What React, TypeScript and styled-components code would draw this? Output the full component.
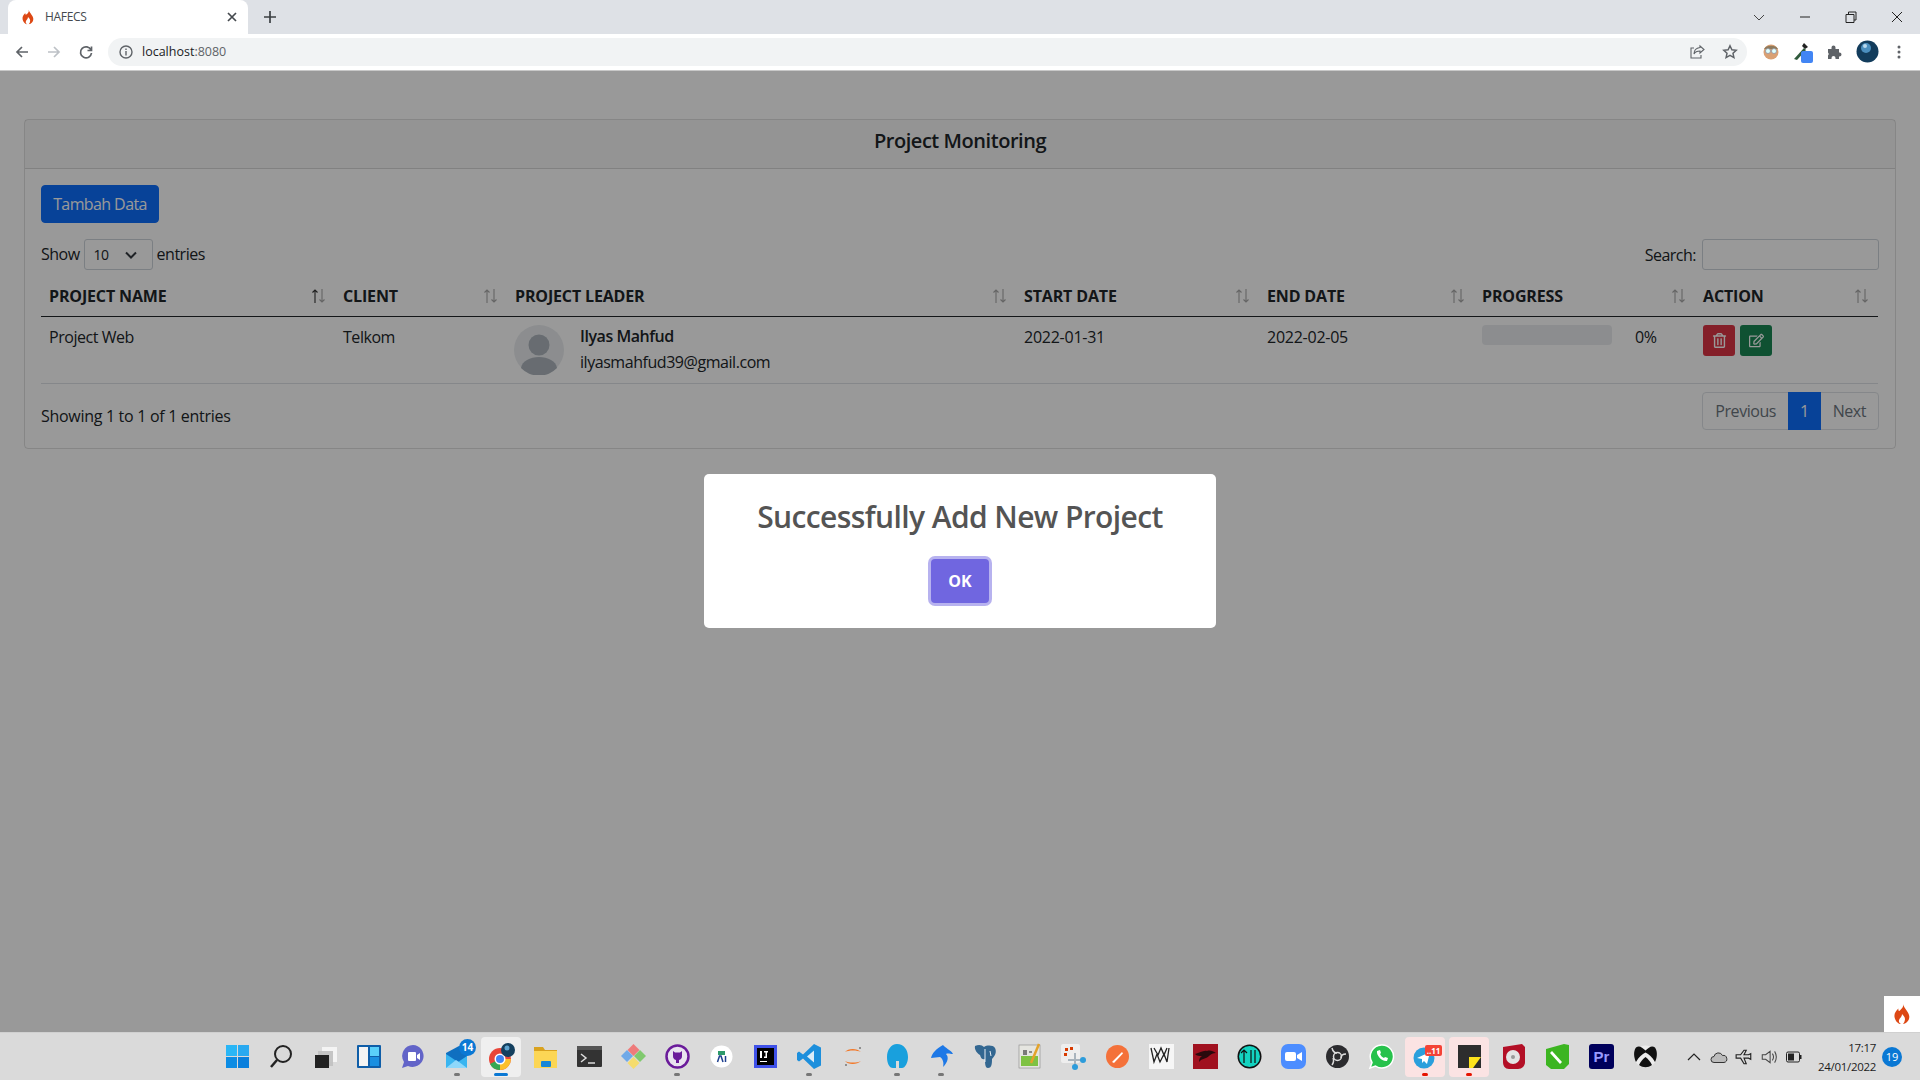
import { ReactNode } from 'react';
import styled, { createGlobalStyle } from 'styled-components';
import { FaRegTrashAlt, FaRegEdit } from 'react-icons/fa';

const GlobalStyle = createGlobalStyle`
  html, body {
    margin: 0;
    padding: 0;
    overflow: hidden;
  }
  * {
    box-sizing: border-box;
  }
  body {
    font-family: "Open Sans", "Noto Sans", sans-serif;
    color: #212529;
  }
`;

const Screen = styled.div`
  display: flex;
  flex-direction: column;
  width: 1920px;
  height: 1080px;
  overflow: hidden;
`;

const TabStrip = styled.div`
  display: flex;
  align-items: flex-end;
  height: 34px;
  padding-left: 8px;
  background: #dee1e6;
`;

const Tab = styled.div`
  display: flex;
  align-items: center;
  width: 240px;
  height: 34px;
  padding: 0 8px 1px 12px;
  gap: 9px;
  background: #fff;
  border-radius: 8px 8px 0 0;
  font: 12px "Open Sans", sans-serif;
  letter-spacing: -0.3px;
  color: #45494e;
`;

const TabTitle = styled.span`
  flex: 1;
`;

const NewTab = styled.div`
  display: flex;
  align-items: center;
  justify-content: center;
  width: 28px;
  height: 34px;
  margin-left: 8px;
  color: #3c4043;
`;

const WindowButtons = styled.div`
  display: flex;
  align-items: center;
  height: 34px;
  margin-left: auto;
`;

const WindowButton = styled.div`
  display: flex;
  align-items: center;
  justify-content: center;
  width: 46px;
  height: 28px;
`;

const Toolbar = styled.div`
  display: flex;
  align-items: center;
  height: 37px;
  padding: 0 5px 1px 6px;
  background: #fff;
  border-bottom: 1px solid #c8c8c8;
`;

const NavButton = styled.div`
  display: flex;
  align-items: center;
  justify-content: center;
  width: 32px;
  height: 28px;
`;

const Omnibox = styled.div`
  display: flex;
  align-items: center;
  flex: 1;
  height: 28px;
  margin: 0 8px 0 6px;
  padding: 0 9px 0 10px;
  gap: 8px;
  background: #f1f3f4;
  border-radius: 14px;
  font: 12.5px "Open Sans", sans-serif;
  color: #202124;
`;

const Port = styled.span`
  margin-left: -8px;
  color: #5f6368;
`;

const OmniboxEnd = styled.div`
  display: flex;
  align-items: center;
  margin-left: auto;
  gap: 17px;
`;

const ExtensionButton = styled.div`
  display: flex;
  align-items: center;
  justify-content: center;
  width: 32px;
  height: 28px;
`;

const Viewport = styled.div`
  position: relative;
  flex: 1;
  padding: 48px 24px 0 24px;
  background: #fff;
  overflow: hidden;
`;

const Card = styled.section`
  border: 1px solid rgba(0, 0, 0, 0.125);
  border-radius: 4px;
  font-size: 16px;
`;

const CardHeader = styled.header`
  height: 49px;
  line-height: 42px;
  text-align: center;
  background: rgba(0, 0, 0, 0.03);
  border-bottom: 1px solid rgba(0, 0, 0, 0.125);
  font-size: 20px;
  font-weight: 600;
  letter-spacing: -0.45px;
`;

const CardBody = styled.div`
  padding: 16px 16px 18px;
`;

const PrimaryButton = styled.button`
  display: block;
  width: 118px;
  height: 38px;
  padding: 0;
  background: #0d6efd;
  border: 1px solid #0d6efd;
  border-radius: 4px;
  color: #fff;
  font: inherit;
  letter-spacing: -0.6px;
`;

const TableControls = styled.div`
  display: flex;
  align-items: center;
  justify-content: space-between;
  margin-top: 16px;
  height: 31px;
  letter-spacing: -0.5px;
`;

const LengthLabel = styled.label`
  display: flex;
  align-items: center;
  gap: 4px;
  margin-top: -1px;
`;

const LengthSelect = styled.div`
  display: flex;
  align-items: center;
  justify-content: space-between;
  width: 69px;
  height: 31px;
  margin-top: 1px;
  padding: 0 13px 0 9px;
  background: #fff;
  border: 1px solid #ced4da;
  border-radius: 3px;
  font-size: 14px;
`;

const SearchLabel = styled.label`
  display: flex;
  align-items: center;
  gap: 6px;
`;

const SearchInput = styled.input`
  width: 177px;
  height: 31px;
  background: #fff;
  border: 1px solid #ced4da;
  border-radius: 3px;
`;

const Table = styled.table`
  width: 1837px;
  margin-top: 6px;
  border-collapse: collapse;
  table-layout: fixed;
  letter-spacing: -0.45px;
`;

const HeadCell = styled.th`
  height: 40px;
  padding: 1px 8px 0;
  border-bottom: 1px solid #212529;
  font-weight: 700;
  text-align: left;
  text-transform: uppercase;
  letter-spacing: -0.15px;
`;

const HeadInner = styled.div`
  display: flex;
  align-items: center;
  justify-content: space-between;
`;

const BodyCell = styled.td`
  height: 67px;
  padding: 8px;
  vertical-align: top;
  border-bottom: 1px solid #dee2e6;
`;

const CellText = styled.div<{ $numeric?: boolean }>`
  line-height: 24px;
  letter-spacing: ${({ $numeric }) => ($numeric ? '-0.25px' : 'inherit')};
`;

const Leader = styled.div`
  display: flex;
  align-items: flex-start;
  gap: 16px;
  margin-left: -1px;
`;

const Avatar = styled.svg`
  display: block;
  width: 50px;
  height: 50px;
  flex: none;
`;

const LeaderName = styled.div`
  font-weight: 600;
  line-height: 26px;
  margin-top: -2px;
`;

const LeaderMail = styled.div`
  line-height: 26px;
`;

const ProgressCell = styled.div`
  display: flex;
  align-items: flex-start;
  gap: 23px;
`;

const ProgressTrack = styled.div`
  width: 130px;
  height: 20px;
  background: #e9ecef;
  border-radius: 4px;
`;

const ActionRow = styled.div`
  display: flex;
  gap: 5px;
`;

const ActionButton = styled.button<{ $bg: string }>`
  display: flex;
  align-items: center;
  justify-content: center;
  width: 32px;
  height: 31px;
  padding: 0;
  background: ${({ $bg }) => $bg};
  border: none;
  border-radius: 3px;
  color: #fff;
  font-size: 15px;
`;

const TableFooter = styled.div`
  display: flex;
  align-items: flex-start;
  justify-content: space-between;
  margin-top: 8px;
  letter-spacing: -0.3px;
`;

const EntriesInfo = styled.span`
  padding-top: 13px;
`;

const Pagination = styled.div`
  display: flex;
  height: 38px;
  background: #fff;
  border: 1px solid #dee2e6;
  border-radius: 4px;
  letter-spacing: -0.45px;
`;

const PageLink = styled.div<{ $active?: boolean }>`
  display: flex;
  align-items: center;
  padding: 0 12px;
  margin-top: -1px;
  margin-bottom: -1px;
  background: ${({ $active }) => ($active ? '#0d6efd' : 'transparent')};
  color: ${({ $active }) => ($active ? '#fff' : '#6c757d')};
`;

const Backdrop = styled.div`
  position: absolute;
  inset: 0;
  display: flex;
  justify-content: center;
  align-items: flex-start;
  padding-top: 403px;
  background: rgba(0, 0, 0, 0.4);
`;

const Modal = styled.div`
  display: flex;
  flex-direction: column;
  align-items: center;
  width: 512px;
  height: 154px;
  padding-top: 20px;
  background: #fff;
  border-radius: 5px;
`;

const ModalTitle = styled.h2`
  margin: 0;
  color: #545454;
  font-size: 30px;
  font-weight: 600;
  line-height: 46px;
  letter-spacing: -0.6px;
`;

const ConfirmButton = styled.button`
  width: 58px;
  height: 44px;
  margin-top: 19px;
  padding: 0;
  background: #7066e0;
  border: none;
  border-radius: 4px;
  box-shadow: 0 0 0 3px rgba(112, 102, 224, 0.5);
  color: #fff;
  font: 700 16px "Open Sans", sans-serif;
`;

const DebugToggle = styled.div`
  position: absolute;
  right: 0;
  bottom: 0;
  display: flex;
  align-items: center;
  justify-content: center;
  width: 36px;
  height: 36px;
  background: #fff;
`;

const Taskbar = styled.footer`
  display: flex;
  align-items: center;
  height: 48px;
  padding-left: 217px;
  background: #dadada;
  border-top: 1px solid #d0d0d0;
`;

const TaskIcon = styled.div<{ $state?: 'open' | 'alert' }>`
  position: relative;
  display: flex;
  align-items: center;
  justify-content: center;
  width: 40px;
  height: 40px;
  margin-right: 4px;
  border-radius: 4px;
  background: ${({ $state }) =>
    $state === 'alert' ? '#fbe3e3' : $state === 'open' ? '#efefef' : 'transparent'};
`;

const RunningDot = styled.span<{ $color: string; $wide?: boolean }>`
  position: absolute;
  left: 50%;
  bottom: 1px;
  width: ${({ $wide }) => ($wide ? '14px' : '6px')};
  height: 3px;
  margin-left: ${({ $wide }) => ($wide ? '-7px' : '-3px')};
  border-radius: 2px;
  background: ${({ $color }) => $color};
`;

const CountBadge = styled.span<{ $bg: string; $square?: boolean }>`
  position: absolute;
  top: ${({ $square }) => ($square ? '8px' : '2px')};
  right: ${({ $square }) => ($square ? '3px' : '1px')};
  min-width: 17px;
  height: ${({ $square }) => ($square ? '11px' : '17px')};
  border-radius: ${({ $square }) => ($square ? '2px' : '9px')};
  background: ${({ $bg }) => $bg};
  color: #fff;
  font: 700 ${({ $square }) => ($square ? '8px/11px' : '10px/17px')} "Open Sans", sans-serif;
  text-align: center;
`;

const Tray = styled.div`
  display: flex;
  align-items: center;
  margin-left: auto;
  gap: 7px;
  padding-right: 18px;
`;

const TrayIcon = styled.div`
  display: flex;
  align-items: center;
  justify-content: center;
  width: 18px;
  height: 20px;
`;

const Clock = styled.div`
  margin-left: 8px;
  text-align: right;
  font: 11.5px/19px "Open Sans", sans-serif;
  letter-spacing: -0.3px;
  color: #1c1c1c;
`;

const NotifyBadge = styled.div`
  display: flex;
  align-items: center;
  justify-content: center;
  width: 20px;
  height: 20px;
  margin-left: -1px;
  border-radius: 50%;
  background: #0a78d4;
  color: #fff;
  font: 11px "Open Sans", sans-serif;
`;

const Flame = ({ size }: { size: number }) => (
  <svg width={size} height={size} viewBox="0 0 24 24">
    <path
      fill="#dd4814"
      d="M13 1c1 3-1 5-3 7-2 2-2-1-2-2-3 3-5 6-4 10 1 4 4 7 7 7-2-1-3-3-2-5 1-2 3-3 3-6 2 2 4 4 3 7-.3 2-1.500 3-2 4 4-.5 7-4 7-8 0-5-5-8-7-14z"
    />
  </svg>
);

const Line = ({ d, c = '#5f6368', w = 2, s = 16 }: { d: string; c?: string; w?: number; s?: number }) => (
  <svg width={s} height={s} viewBox="0 0 16 16" fill="none" stroke={c} strokeWidth={w}>
    <path d={d} />
  </svg>
);

const SortArrows = ({ active }: { active?: boolean }) => (
  <svg width="16" height="18" viewBox="0 0 16 18" fill="none" strokeWidth="1.100">
    <path d="M4 16V3M1.500 5.500 4 3l2.500 2.500" stroke={active ? '#333' : '#a8a8a8'} />
    <path d="M11 2v13M8.500 12.500 11 15l2.500-2.500" stroke="#a8a8a8" />
  </svg>
);

const columns = [
  { label: 'Project Name', width: 294 },
  { label: 'Client', width: 172 },
  { label: 'Project Leader', width: 509 },
  { label: 'Start Date', width: 243 },
  { label: 'End Date', width: 215 },
  { label: 'Progress', width: 221 },
  { label: 'Action', width: 183 },
];

const ic = (children: ReactNode) => (
  <svg width="27" height="27" viewBox="0 0 27 27">
    {children}
  </svg>
);

type TaskEntry = {
  icon: ReactNode;
  state?: 'open' | 'alert';
  dot?: string;
  wide?: boolean;
  badge?: string;
  badgeBg?: string;
  square?: boolean;
};

const taskIcons: TaskEntry[] = [
  {
    icon: ic(
      <>
        <rect x="2" y="2" width="11" height="11" fill="#29b6f6" />
        <rect x="14" y="2" width="11" height="11" fill="#29a9f0" />
        <rect x="2" y="14" width="11" height="11" fill="#0c8ce4" />
        <rect x="14" y="14" width="11" height="11" fill="#0a7fdc" />
      </>
    ),
  },
  {
    icon: ic(
      <>
        <circle cx="15" cy="11" r="8" fill="none" stroke="#222" strokeWidth="2" />
        <path d="M9 17l-6 7" stroke="#222" strokeWidth="2.500" />
      </>
    ),
  },
  {
    icon: ic(
      <>
        <rect x="10" y="4" width="15" height="15" fill="#f4f4f4" />
        <rect x="6" y="8" width="15" height="15" fill="#c0c0c0" opacity="0.9" />
        <rect x="3" y="12" width="14" height="13" fill="#222" />
      </>
    ),
  },
  {
    icon: ic(
      <>
        <rect x="1" y="2" width="24" height="23" fill="#0f5ea8" rx="1" />
        <rect x="3" y="4" width="9" height="19" fill="#f4f4f4" />
        <rect x="14" y="4" width="9" height="9" fill="#5ad0fa" />
        <rect x="14" y="14" width="9" height="9" fill="#1a8fe0" />
      </>
    ),
  },
  {
    icon: ic(
      <>
        <path d="M13 2a11 11 0 1 1-5 21l-6 2 2-6A11 11 0 0 1 13 2z" fill="#6264c8" />
        <rect x="8" y="9" width="8" height="9" rx="1" fill="#fff" />
        <path d="M17 12l3-2v7l-3-2z" fill="#fff" />
      </>
    ),
  },
  {
    icon: ic(
      <>
        <path d="M2 10 15 3h8v22H2z" fill="#0f6fc0" />
        <path d="M2 11l12 8 9-6v12H2z" fill="#39b5f0" />
        <path d="M2 25l10-8 3 2 8 6z" fill="#8ed8fb" />
      </>
    ),
    dot: '#767676',
    badge: '14',
    badgeBg: '#0a78d4',
  },
  {
    icon: ic(
      <>
        <circle cx="12" cy="16" r="11" fill="#e8463a" />
        <path d="M12 16 2 21a11 11 0 0 0 10 6z" fill="#34a853" />
        <path d="M12 16v11a11 11 0 0 0 11-11z" fill="#fbc02d" />
        <circle cx="12" cy="16" r="5.500" fill="#fff" />
        <circle cx="12" cy="16" r="4" fill="#4285f4" />
        <circle cx="20" cy="7" r="7" fill="#14405f" />
        <circle cx="19" cy="5" r="2.500" fill="#5fa3cf" />
      </>
    ),
    state: 'open',
    dot: '#0a78d4',
    wide: true,
  },
  {
    icon: ic(
      <>
        <path d="M2 4h9l2 3h12v18H2z" fill="#d9a21f" />
        <rect x="2" y="8" width="23" height="17" fill="#fcd655" />
        <rect x="9" y="18" width="10" height="6" rx="1" fill="#1787d8" />
      </>
    ),
  },
  {
    icon: ic(
      <>
        <rect x="1" y="3" width="25" height="21" rx="1" fill="#333" />
        <rect x="1" y="3" width="25" height="4" fill="#555" />
        <path d="M5 11l5 4-5 4" stroke="#ddd" strokeWidth="1.500" fill="none" />
        <path d="M12 20h7" stroke="#ddd" strokeWidth="1.500" />
      </>
    ),
  },
  {
    icon: ic(
      <>
        <path d="M13.500 1l6 6-6 6-6-6z" fill="#ee7b7b" />
        <path d="M20 7l6 6-6 6-6-6z" fill="#80c96e" />
        <path d="M13.500 14l6 6-6 6-6-6z" fill="#f5dc6d" />
        <path d="M7 7l6 6-6 6-6-6z" fill="#6fa9e8" />
      </>
    ),
  },
  {
    icon: ic(
      <>
        <circle cx="13.500" cy="13.500" r="11" fill="#e9e3ef" stroke="#6a1b9a" strokeWidth="2.500" />
        <path d="M9 8l2 1.500h5L18 8v5a4 4 0 0 1-3 4v3h-3v-3a4 4 0 0 1-3-4z" fill="#6a1b9a" />
      </>
    ),
    dot: '#767676',
  },
  {
    icon: ic(
      <>
        <circle cx="13.500" cy="13.500" r="11" fill="#fff" />
        <rect x="10" y="8" width="7" height="4" fill="#2e9a6b" />
        <path d="M9.500 19l2-6h1.500l2 6M17.500 13v6" fill="none" stroke="#1d3f8f" strokeWidth="1.500" />
      </>
    ),
  },
  {
    icon: ic(
      <>
        <rect x="2" y="2" width="23" height="23" fill="#3f51e8" />
        <rect x="5" y="5" width="17" height="17" fill="#000" />
        <path d="M8 8h2v7H8zM12 8h4v1.500h-1V15h-3v-1.500h1.500V9.500H12zM8 18h7v1H8z" fill="#fff" />
      </>
    ),
  },
  {
    icon: ic(
      <>
        <path d="M18 1l7 3.500v18L18 26 7 15.500l-4 3-2-1.500v-7l2-1.500 4 3z" fill="#1d8fdc" />
        <path d="M18 7.500v12l-7-6z" fill="#dcecf8" />
      </>
    ),
    dot: '#767676',
  },
  {
    icon: ic(
      <>
        <path d="M5 9c3-4 12-4 16 0-4-2-12-2-16 0zM5 18c3 4 12 4 16 0-4 2-12 2-16 0z" fill="#f37726" />
        <circle cx="20" cy="5" r="1" fill="#777" />
        <circle cx="6" cy="22" r="1" fill="#777" />
      </>
    ),
  },
  {
    icon: ic(
      <path d="M13 1c7 0 11 6 11 13 0 6-3 11-6 11h-3v-7h-3v7H9c-4 0-6-5-6-11C3 7 7 1 13 1z" fill="#19a0dd" />
    ),
    dot: '#767676',
  },
  {
    icon: ic(
      <path d="M15 2c2 3 8 5 10 9-3 0-5-1-7 0 3 3 2 8-3 13 1-4 0-8-3-10l-9 1c1-5 5-9 12-13z" fill="#1d78e6" />
    ),
    dot: '#767676',
  },
  {
    icon: ic(
      <>
        <path d="M3 3c4-2 7-1 9 1 3-2 9-2 11 1 2 4 0 8-3 11 0 4 0 9-4 9-3 0-3-5-3-9-4 1-4-2-5-4-2-1-6-5-5-9z" fill="#336791" />
        <path d="M13 6v13M18 8l1 5" stroke="#e8eef4" strokeWidth="1" fill="none" />
      </>
    ),
  },
  {
    icon: ic(
      <>
        <rect x="3" y="2" width="21" height="23" fill="#e5e5e0" stroke="#888" strokeWidth="0.600" />
        <rect x="5" y="13" width="17" height="10" fill="#7ec242" />
        <path d="M8 7v5M10 7v5M13 9h3" stroke="#333" strokeWidth="1.200" />
        <path d="M23 1l-8 19" stroke="#e4a32a" strokeWidth="2.500" />
      </>
    ),
  },
  {
    icon: ic(
      <>
        <rect x="1" y="1" width="19" height="19" rx="2" fill="#eee" />
        <path d="M5 5h3v3H5zM10 4h3v3h-3zM4 10h3v3H4z" fill="#d83b01" />
        <path d="M8 17h14M15 10v14" stroke="#a9b4bd" strokeWidth="2" />
        <circle cx="23" cy="17" r="3" fill="#2d9cdb" />
        <circle cx="15" cy="24" r="3" fill="#2d9cdb" />
      </>
    ),
  },
  {
    icon: ic(
      <>
        <circle cx="13.500" cy="13.500" r="11.500" fill="#f4713a" />
        <path d="M8 19 18 9l1 1.500L10 20z" fill="#fff" />
      </>
    ),
  },
  {
    icon: ic(
      <>
        <rect x="1" y="1" width="25" height="25" fill="#f6f6f6" />
        <path d="M3 5l3 14 3-8 3 8 4-8 3 8 2-14M6 5l4 7 3-7 3 7 3-7" fill="none" stroke="#222" strokeWidth="1.300" />
      </>
    ),
  },
  {
    icon: ic(
      <>
        <rect x="1" y="1" width="25" height="25" fill="#a0111f" />
        <path d="M3 11c5-1 8-4 12-3 3-1 6 0 9 2-3 0-5 1-7 3-3 3-7 2-10 6 0-3 1-5 3-6-3 0-5 0-7-2z" fill="#2a0a0d" />
      </>
    ),
  },
  {
    icon: ic(
      <>
        <circle cx="13.500" cy="13.500" r="12" fill="#111" />
        <circle cx="13.500" cy="13.500" r="10.500" fill="#13d3c0" />
        <path d="M8 7v13M5 10l3-3 3 3M15 7v13M19 7v13" fill="none" stroke="#111" strokeWidth="1.200" />
      </>
    ),
  },
  {
    icon: ic(
      <>
        <rect x="1" y="1" width="25" height="25" rx="7" fill="#4c8dff" />
        <rect x="5" y="9" width="11" height="9" rx="2" fill="#fff" />
        <path d="M17 12l5-3v9l-5-3z" fill="#fff" />
      </>
    ),
  },
  {
    icon: ic(
      <>
        <circle cx="13.500" cy="13.500" r="11.500" fill="#2b2b2e" />
        <circle cx="13.500" cy="13.500" r="4" fill="none" stroke="#ddd" strokeWidth="1.500" />
        <path d="M8 5c1 4 3 5 5 5M22 11c-3 0-5 1-5 4M8 22c2-3 2-5 1-7" fill="none" stroke="#ddd" strokeWidth="1.500" />
      </>
    ),
  },
  {
    icon: ic(
      <>
        <path d="M13.500 2a11.500 11.500 0 1 1-6 21L2 25l2-5.500A11.500 11.500 0 0 1 13.500 2z" fill="#27c24c" stroke="#fff" strokeWidth="1.500" />
        <path d="M9 8c-1 4 5 11 10 10l1-3-3-1-1 1c-2-1-3-2-4-4l1-1-1-3z" fill="#fff" />
      </>
    ),
  },
  {
    icon: ic(
      <>
        <circle cx="12" cy="15" r="10.500" fill="#2b9fdc" />
        <path d="M5 15l13-6-3 12-3-3-2 2v-4z" fill="#fff" />
      </>
    ),
    state: 'alert',
    dot: '#e51400',
    badge: '..11',
    badgeBg: '#f44336',
    square: true,
  },
  {
    icon: ic(
      <>
        <rect x="2" y="2" width="23" height="23" fill="#2d2d2d" />
        <path d="M13 14h12l-8 11h-4z" fill="#fde21c" />
      </>
    ),
    state: 'alert',
    dot: '#e51400',
  },
  {
    icon: ic(
      <>
        <path d="M3 4 22 1l3 3v15c0 4-3 7-7 7H9c-4 0-6-3-6-7z" fill="#b30f26" />
        <circle cx="13" cy="14" r="7" fill="#e4e4e4" />
        <circle cx="13" cy="14" r="2" fill="#999" />
      </>
    ),
  },
  {
    icon: ic(
      <>
        <path d="M2 6l18-5 5 1v19l-5 5H7l-5-4z" fill="#3cb521" />
        <path d="M8 8l10 11-2 2L6 10z" fill="#fff" />
      </>
    ),
  },
  {
    icon: (
      <svg width="27" height="27" viewBox="0 0 27 27">
        <rect x="1" y="1" width="25" height="25" rx="3" fill="#00005b" />
        <text x="13.500" y="19" textAnchor="middle" fontSize="15" fontWeight="700" fontFamily="Liberation Sans" fill="#9999ff">
          Pr
        </text>
      </svg>
    ),
  },
  {
    icon: ic(
      <>
        <circle cx="13.500" cy="13.500" r="11" fill="#ececec" />
        <path d="M4 4.500C7 2 10 4 13.500 7.500 17 4 20 2 23 4.500c3 4 2 11 0 14.500-3-5-6-8-9.500-9.500C10 11 7 14 4 19 2 15 1 8.500 4 4.500z" fill="#111" />
        <path d="M13.500 14c3 2 5 5 6.500 8-4 3-9 3-13 0 1.500-3 3.500-6 6.500-8z" fill="#111" />
      </>
    ),
  },
];

export default function App() {
  return (
    <Screen>
      <GlobalStyle />
      <TabStrip>
        <Tab>
          <Flame size={16} />
          <TabTitle>HAFECS</TabTitle>
          <Line d="M4 4l8 8M12 4l-8 8" c="#45494e" w={1.700} />
        </Tab>
        <NewTab>
          <Line d="M8 2v12M2 8h12" c="#3c4043" w={1.700} />
        </NewTab>
        <WindowButtons>
          <WindowButton>
            <Line d="M3 6l5 5 5-5" c="#444" w={1} />
          </WindowButton>
          <WindowButton>
            <Line d="M3 8h10" c="#222" w={1} />
          </WindowButton>
          <WindowButton>
            <Line d="M3 5.500h8v8H3zM5.500 5V3H13v8h-2" c="#222" w={1} />
          </WindowButton>
          <WindowButton>
            <Line d="M3 3l10 10M13 3 3 13" c="#222" w={1} />
          </WindowButton>
        </WindowButtons>
      </TabStrip>

      <Toolbar>
        <NavButton>
          <Line d="M14 8H3M8 3 3 8l5 5" w={1.700} />
        </NavButton>
        <NavButton>
          <Line d="M2 8h11M8 3l5 5-5 5" c="#bdc1c6" w={1.700} />
        </NavButton>
        <NavButton>
          <Line d="M13 6a5.500 5.500 0 1 0 .5 3M13.500 2.500V6.500H9.500" w={1.700} />
        </NavButton>
        <Omnibox>
          <svg width="16" height="16" viewBox="0 0 16 16" fill="none" stroke="#5f6368" strokeWidth="1.400">
            <circle cx="8" cy="8" r="6" />
            <path d="M8 7v4.500M8 4.500v1.500" />
          </svg>
          <span>localhost</span>
          <Port>:8080</Port>
          <OmniboxEnd>
            <Line d="M11 2l4 3.500L11 9V7C8 7 6 8 5 10c0-4 2-6 6-6.500zM12 11v3H2V4h3" w={1.100} />
            <svg width="16" height="16" viewBox="0 0 16 16" fill="none" stroke="#5f6368" strokeWidth="1.500">
              <path d="M8 1.800l1.900 4 4.300.5-3.200 3 .9 4.300L8 11.400l-3.900 2.200.9-4.300-3.200-3 4.300-.5z" />
            </svg>
          </OmniboxEnd>
        </Omnibox>
        <ExtensionButton>
          <svg width="16" height="16" viewBox="0 0 16 16">
            <circle cx="8" cy="8" r="7.500" fill="#d9a074" />
            <path d="M1 5a7.500 5 0 0 1 14 0z" fill="#8f7a5c" />
            <circle cx="5" cy="7" r="2.500" fill="#dff" stroke="#889" strokeWidth="0.700" />
            <circle cx="11" cy="7" r="2.500" fill="#dff" stroke="#889" strokeWidth="0.700" />
          </svg>
        </ExtensionButton>
        <ExtensionButton>
          <svg width="22" height="24" viewBox="0 0 22 24">
            <path d="M2 19 12 8l2 2L5 20z" fill="#2f5a3c" />
            <path d="M12 3l4 4-3 2-3-3z" fill="#222" />
            <rect x="9" y="11" width="12" height="12" rx="2" fill="#4285f4" />
          </svg>
        </ExtensionButton>
        <ExtensionButton>
          <svg width="16" height="16" viewBox="0 0 16 16">
            <path
              fill="#5f6368"
              d="M1 5h3.500V3.500a2 2 0 0 1 4 0V5H12v3.500h.5a2 2 0 0 1 0 4H12V15H8.500v-1a2 2 0 0 0-4 0v1H1v-3.500a2 2 0 0 0 0-3z"
            />
          </svg>
        </ExtensionButton>
        <ExtensionButton>
          <svg width="23" height="23" viewBox="0 0 23 23">
            <circle cx="11.500" cy="11.500" r="11" fill="#123c5c" />
            <circle cx="10" cy="8" r="5" fill="#4b8fbf" />
            <circle cx="9" cy="6" r="2" fill="#b8d8ee" />
          </svg>
        </ExtensionButton>
        <ExtensionButton>
          <svg width="4" height="16" viewBox="0 0 4 16" fill="#5f6368">
            <circle cx="2" cy="3" r="1.500" />
            <circle cx="2" cy="8" r="1.500" />
            <circle cx="2" cy="13" r="1.500" />
          </svg>
        </ExtensionButton>
      </Toolbar>

      <Viewport>
        <Card>
          <CardHeader>Project Monitoring</CardHeader>
          <CardBody>
            <PrimaryButton>Tambah Data</PrimaryButton>
            <TableControls>
              <LengthLabel>
                Show
                <LengthSelect>
                  10
                  <Line d="M3 5.500 8 10.500l5-5" c="#343a40" w={2} />
                </LengthSelect>
                entries
              </LengthLabel>
              <SearchLabel>
                Search:
                <SearchInput />
              </SearchLabel>
            </TableControls>
            <Table>
              <colgroup>
                {columns.map((c) => (
                  <col key={c.label} style={{ width: c.width }} />
                ))}
              </colgroup>
              <thead>
                <tr>
                  {columns.map((c, i) => (
                    <HeadCell key={c.label}>
                      <HeadInner>
                        {c.label}
                        <SortArrows active={i === 0} />
                      </HeadInner>
                    </HeadCell>
                  ))}
                </tr>
              </thead>
              <tbody>
                <tr>
                  <BodyCell>
                    <CellText>Project Web</CellText>
                  </BodyCell>
                  <BodyCell>
                    <CellText>Telkom</CellText>
                  </BodyCell>
                  <BodyCell>
                    <Leader>
                      <Avatar viewBox="0 0 50 50">
                        <circle cx="25" cy="25" r="25" fill="#e9ecef" />
                        <circle cx="25" cy="20" r="10.500" fill="#adb5bd" />
                        <path d="M7 43c1-7 9-11 18-11s17 4 18 11a25 25 0 0 1-36 0z" fill="#adb5bd" />
                      </Avatar>
                      <div>
                        <LeaderName>Ilyas Mahfud</LeaderName>
                        <LeaderMail>ilyasmahfud39@gmail.com</LeaderMail>
                      </div>
                    </Leader>
                  </BodyCell>
                  <BodyCell>
                    <CellText $numeric>2022-01-31</CellText>
                  </BodyCell>
                  <BodyCell>
                    <CellText $numeric>2022-02-05</CellText>
                  </BodyCell>
                  <BodyCell>
                    <ProgressCell>
                      <ProgressTrack />
                      <CellText>0%</CellText>
                    </ProgressCell>
                  </BodyCell>
                  <BodyCell>
                    <ActionRow>
                      <ActionButton $bg="#dc3545">
                        <FaRegTrashAlt />
                      </ActionButton>
                      <ActionButton $bg="#198754">
                        <FaRegEdit />
                      </ActionButton>
                    </ActionRow>
                  </BodyCell>
                </tr>
              </tbody>
            </Table>
            <TableFooter>
              <EntriesInfo>Showing 1 to 1 of 1 entries</EntriesInfo>
              <Pagination>
                <PageLink>Previous</PageLink>
                <PageLink $active>1</PageLink>
                <PageLink>Next</PageLink>
              </Pagination>
            </TableFooter>
          </CardBody>
        </Card>

        <Backdrop>
          <Modal>
            <ModalTitle>Successfully Add New Project</ModalTitle>
            <ConfirmButton>OK</ConfirmButton>
          </Modal>
        </Backdrop>

        <DebugToggle>
          <Flame size={22} />
        </DebugToggle>
      </Viewport>

      <Taskbar>
        {taskIcons.map((t, i) => (
          <TaskIcon key={i} $state={t.state}>
            {t.icon}
            {t.badge && (
              <CountBadge $bg={t.badgeBg ?? '#0a78d4'} $square={t.square}>
                {t.badge}
              </CountBadge>
            )}
            {t.dot && <RunningDot $color={t.dot} $wide={t.wide} />}
          </TaskIcon>
        ))}
        <Tray>
          <TrayIcon>
            <Line d="M2 11l6-6 6 6" c="#222" w={1.200} />
          </TrayIcon>
          <TrayIcon>
            <svg width="18" height="14" viewBox="0 0 18 14" fill="#bbb" stroke="#333" strokeWidth="1">
              <path d="M4 12.500a3 3 0 0 1 0-6 4.500 4.500 0 0 1 8.500-1 3.500 3.500 0 0 1 1.500 7z" />
            </svg>
          </TrayIcon>
          <TrayIcon>
            <Line d="M1 6h4l3-4h2L8 6h4l2-1v5l-2-1H8l2 5H8L5 9H1z" c="#222" w={1} s={18} />
          </TrayIcon>
          <TrayIcon>
            <Line d="M2 6h3l4-3v10l-4-3H2zM11 5q2 3 0 6M13 3q3 5 0 10" c="#444" w={0.900} s={18} />
          </TrayIcon>
          <TrayIcon>
            <svg width="16" height="12" viewBox="0 0 16 12">
              <rect x="0.500" y="1" width="13" height="10" rx="1.500" fill="none" stroke="#222" />
              <rect x="2" y="2.500" width="6" height="7" fill="#222" />
              <rect x="14" y="4" width="1.500" height="4" fill="#222" />
            </svg>
          </TrayIcon>
          <Clock>
            <div>17:17</div>
            <div>24/01/2022</div>
          </Clock>
          <NotifyBadge>19</NotifyBadge>
        </Tray>
      </Taskbar>
    </Screen>
  );
}
